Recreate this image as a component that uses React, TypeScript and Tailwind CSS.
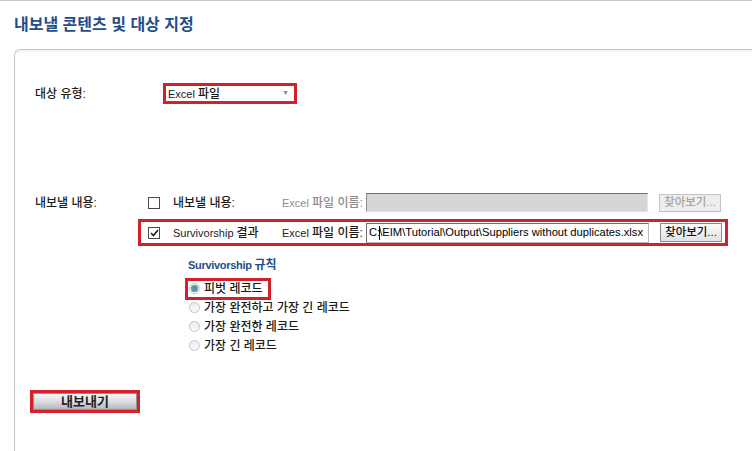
import React from "react";

const font = "font-['Liberation_Sans','Noto_Sans_CJK_KR',sans-serif]";

// Korean glyphs render a touch larger than the Latin ones in the original
function K({ children }: { children: React.ReactNode }) {
  return <span className="text-[12px] font-medium">{children}</span>;
}

function CheckBox({ checked }: { checked?: boolean }) {
  return (
    <span className="flex h-[12px] w-[12px] shrink-0 items-center justify-center border border-[#4a4a4a] bg-white">
      {checked && (
        <svg width="9" height="8" viewBox="0 0 9 8">
          <path d="M1 4 L3.5 6.5 L8 1" fill="none" stroke="#1a1a1a" strokeWidth="1.6" />
        </svg>
      )}
    </span>
  );
}

function Radio({ selected }: { selected?: boolean }) {
  return (
    <span className="flex h-[11px] w-[11px] shrink-0 items-center justify-center rounded-full border border-[#c4c4c4] bg-gradient-to-b from-[#ececec] to-[#fafafa]">
      {selected && <span className="h-[7px] w-[7px] rounded-full bg-[#5b98a0]" />}
    </span>
  );
}

function Browse({ disabled }: { disabled?: boolean }) {
  return (
    <button
      className={
        disabled
          ? "flex h-[18px] w-[62px] items-center justify-center border border-[#c4c4c4] bg-[#eeeeee] text-[11.5px] font-medium text-[#a3a3a3]"
          : "flex h-[19px] w-[62px] items-center justify-center border border-[#8a8a8a] bg-gradient-to-b from-[#fafafa] to-[#e2e2e2] text-[11.5px] font-medium text-[#111]"
      }
    >
      찾아보기...
    </button>
  );
}

const radios = ["피벗 레코드", "가장 완전하고 가장 긴 레코드", "가장 완전한 레코드", "가장 긴 레코드"];

export default function App() {
  return (
    <div className={`flex h-[451px] w-[752px] flex-col overflow-hidden border-t border-[#c8c8c8] bg-white text-[11px] text-[#1a1a1a] ${font}`}>
      <h1 className="ml-[14px] mt-[14px] h-[20px] text-[16px] font-bold leading-[20px] text-[#1f4e8a]">
        내보낼 콘텐츠 및 대상 지정
      </h1>

      <div className="ml-[14px] mt-[14px] flex flex-1 flex-col rounded-tl-[6px] border-l border-t border-[#c6c6c6] pl-[20px] shadow-[inset_0_3px_0_-1px_#f4f4f4]">
        {/* target type */}
        <div className="mt-[33px] flex items-center">
          <span className="w-[128px]">
            <K>대상 유형:</K>
          </span>
          <div className="flex h-[21px] w-[134px] items-center justify-between border-[3px] border-[#d3212c] bg-white pl-[2px] pr-[5px]">
            <span>
              Excel <K>파일</K>
            </span>
            <span className="text-[7px] text-[#8a8a8a]">▼</span>
          </div>
        </div>

        {/* export content */}
        <div className="mt-[85px] flex">
          <span className="flex h-[27px] w-[103px] items-center">
            <K>내보낼 내용:</K>
          </span>
          <div className="flex flex-col gap-[3px]">
            <div className="flex h-[27px] w-[590px] items-center border-[3px] border-transparent pl-[7px]">
              <CheckBox />
              <span className="ml-[13px] w-[109px]">
                <K>내보낼 내용:</K>
              </span>
              <span className="w-[84px] whitespace-nowrap text-[#8c8c8c]">
                Excel <K>파일 이름:</K>
              </span>
              <div className="h-[19px] w-[282px] border border-[#8c8c8c] border-r-[#e4e4e4] border-b-[#e4e4e4] border-t-[#6a6a6a] bg-[#d6d6d6]" />
              <span className="ml-[11px]">
                <Browse disabled />
              </span>
            </div>
            <div className="flex h-[27px] w-[590px] items-center border-[3px] border-[#d3212c] pl-[7px]">
              <CheckBox checked />
              <span className="ml-[13px] w-[109px] whitespace-nowrap">
                Survivorship <K>결과</K>
              </span>
              <span className="w-[84px] whitespace-nowrap">
                Excel <K>파일 이름:</K>
              </span>
              <div className="flex h-[20px] w-[283px] items-center whitespace-nowrap border border-[#b8b8b8] border-l-[#6e6e6e] border-t-[#6e6e6e] bg-white pl-[2px] text-[11.2px] text-black">
                C:<span className="mx-[-1px] h-[14px] border-l border-black" />\EIM\Tutorial\Output\Suppliers without duplicates.xlsx
              </div>
              <span className="ml-[11px]">
                <Browse />
              </span>
            </div>
          </div>
        </div>

        {/* survivorship rules */}
        <div className="ml-[153px] mt-[11px] flex flex-col">
          <h2 className="h-[16px] text-[11px] font-bold leading-[16px] tracking-[-0.3px] text-[#1f4e8a]">
            Survivorship <span className="text-[12px] tracking-normal">규칙</span>
          </h2>
          <ul className="mt-[6px] flex flex-col">
            {radios.map((r, i) => (
              <li key={r} className="flex h-[19px] items-center">
                <span
                  className={
                    i === 0
                      ? "flex h-[16px] w-[80px] items-center gap-[4px] pl-[1px] outline-[3px] outline-[#d3212c] outline-solid"
                      : "flex h-[16px] items-center gap-[4px] pl-[1px]"
                  }
                >
                  <Radio selected={i === 0} />
                  <K>{r}</K>
                </span>
              </li>
            ))}
          </ul>
        </div>

        {/* export button */}
        <div className="ml-[-5px] mt-[35px]">
          <div className="h-[23px] w-[110px] border-[3px] border-[#d3212c]">
            <button className="flex h-full w-full items-center justify-center border border-[#8d9094] bg-gradient-to-b from-[#f4f5f6] via-[#dcdee0] to-[#b4b8bc] text-[13px] font-bold text-[#222]">
              내보내기
            </button>
          </div>
        </div>
      </div>
    </div>
  );
}
